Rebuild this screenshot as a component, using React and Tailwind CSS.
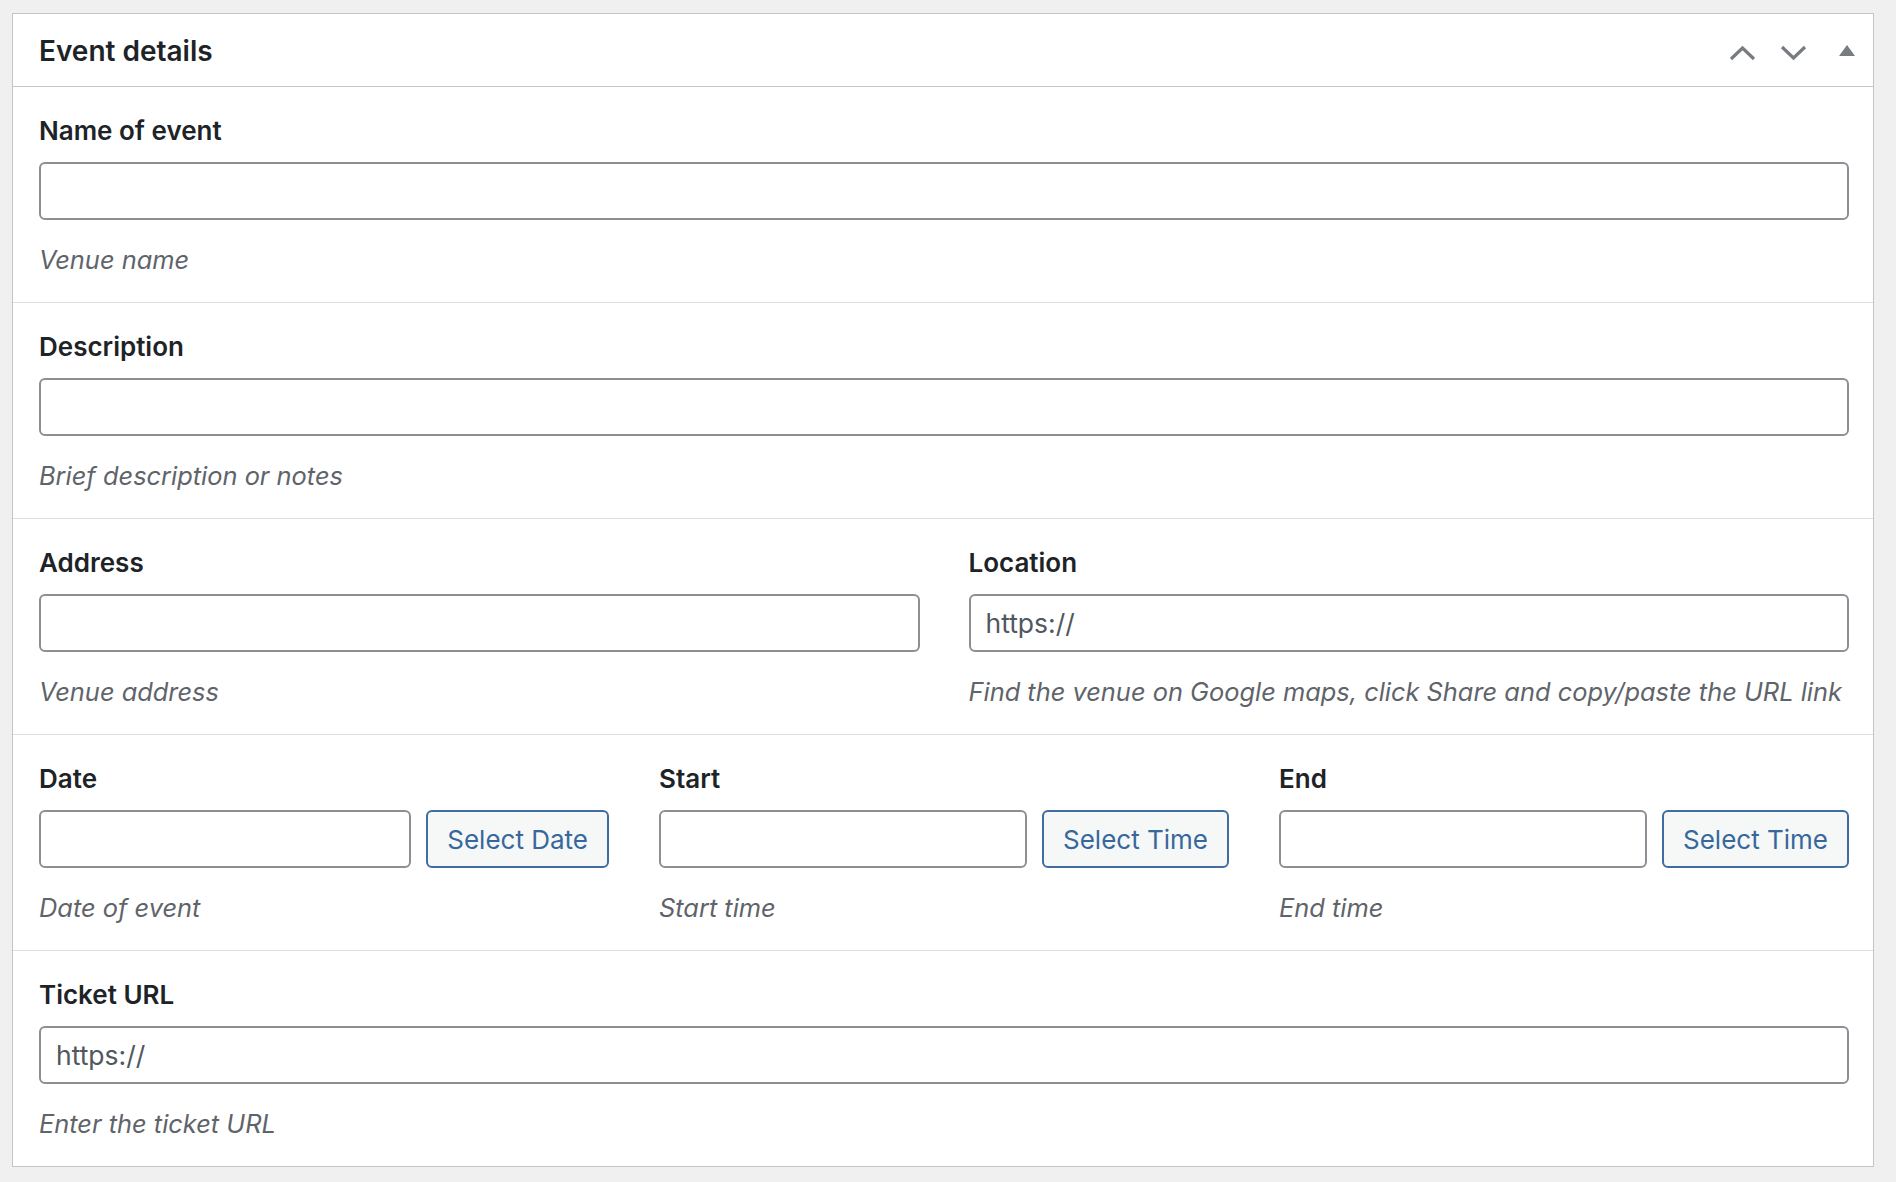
import React from "react";

const font = { fontFamily: "Inter, 'Noto Sans', sans-serif" };

function Label({ children }) {
  return (
    <div className="h-[36px] text-[26px] leading-[36px] font-semibold text-[#1d2327]">
      {children}
    </div>
  );
}

function Help({ children }) {
  return (
    <div className="mt-[22px] h-[36px] text-[25.4px] leading-[36px] italic text-[#5f646a] whitespace-nowrap">
      {children}
    </div>
  );
}

function Input({ placeholder }) {
  return (
    <input
      type="text"
      placeholder={placeholder}
      className="block w-full h-[58px] rounded-[6px] border-2 border-[#8c8f94] bg-white px-[15px] text-[26.5px] text-[#2c3338] placeholder:text-[#50575e] outline-none"
      style={font}
    />
  );
}

function Button({ children }) {
  return (
    <button
      type="button"
      className="h-[58px] shrink-0 rounded-[6px] border-2 border-[#3f6d9f] bg-[#f6f7f7] px-[19px] text-[26px] text-[#36689e]"
      style={font}
    >
      {children}
    </button>
  );
}

function Section({ children, last }) {
  return (
    <div className={"pl-[26px] pr-[24px] pt-[26px] pb-[24px]" + (last ? "" : " border-b border-[#dcdcde]")}>
      {children}
    </div>
  );
}

function Field({ label, help, placeholder }) {
  return (
    <div className="min-w-0">
      <Label>{label}</Label>
      <div className="mt-[13px]">
        <Input placeholder={placeholder} />
      </div>
      <Help>{help}</Help>
    </div>
  );
}

function PickerField({ label, help, button }) {
  return (
    <div className="min-w-0">
      <Label>{label}</Label>
      <div className="mt-[13px] flex gap-[15px]">
        <div className="flex-1 min-w-0">
          <Input />
        </div>
        <Button>{button}</Button>
      </div>
      <Help>{help}</Help>
    </div>
  );
}

export default function App() {
  return (
    <div className="min-h-[1182px] w-full bg-[#f0f0f1] pt-[13px] pl-[12px] pr-[22px] pb-[16px]" style={font}>
      <div className="border border-[#c3c4c7] bg-white">
        <div className="flex h-[73px] items-center justify-between border-b border-[#c3c4c7] pl-[26px] pr-[18px]">
          <h2 className="pt-[2px] text-[28px] font-semibold text-[#1d2327]">Event details</h2>
          <div className="flex items-center pt-[5px]">
            <svg width="27" height="16" viewBox="0 0 27 16" className="mr-[24px]">
              <path d="M2 14 L13.5 3 L25 14" fill="none" stroke="#787c82" strokeWidth="3.2" />
            </svg>
            <svg width="27" height="16" viewBox="0 0 27 16" className="mr-[32px]">
              <path d="M2 2 L13.5 13 L25 2" fill="none" stroke="#787c82" strokeWidth="3.2" />
            </svg>
            <svg width="16" height="12" viewBox="0 0 16 12" className="mb-[4px]">
              <path d="M8 0 L16 11 L0 11 Z" fill="#787c82" />
            </svg>
          </div>
        </div>

        <Section>
          <Field label="Name of event" help="Venue name" />
        </Section>
        <Section>
          <Field label="Description" help="Brief description or notes" />
        </Section>
        <Section>
          <div className="grid grid-cols-2 gap-[49px]">
            <Field label="Address" help="Venue address" />
            <Field label="Location" help="Find the venue on Google maps, click Share and copy/paste the URL link" placeholder="https://" />
          </div>
        </Section>
        <Section>
          <div className="grid grid-cols-3 gap-[50px]">
            <PickerField label="Date" help="Date of event" button="Select Date" />
            <PickerField label="Start" help="Start time" button="Select Time" />
            <PickerField label="End" help="End time" button="Select Time" />
          </div>
        </Section>
        <Section last>
          <Field label="Ticket URL" help="Enter the ticket URL" placeholder="https://" />
        </Section>
      </div>
    </div>
  );
}
